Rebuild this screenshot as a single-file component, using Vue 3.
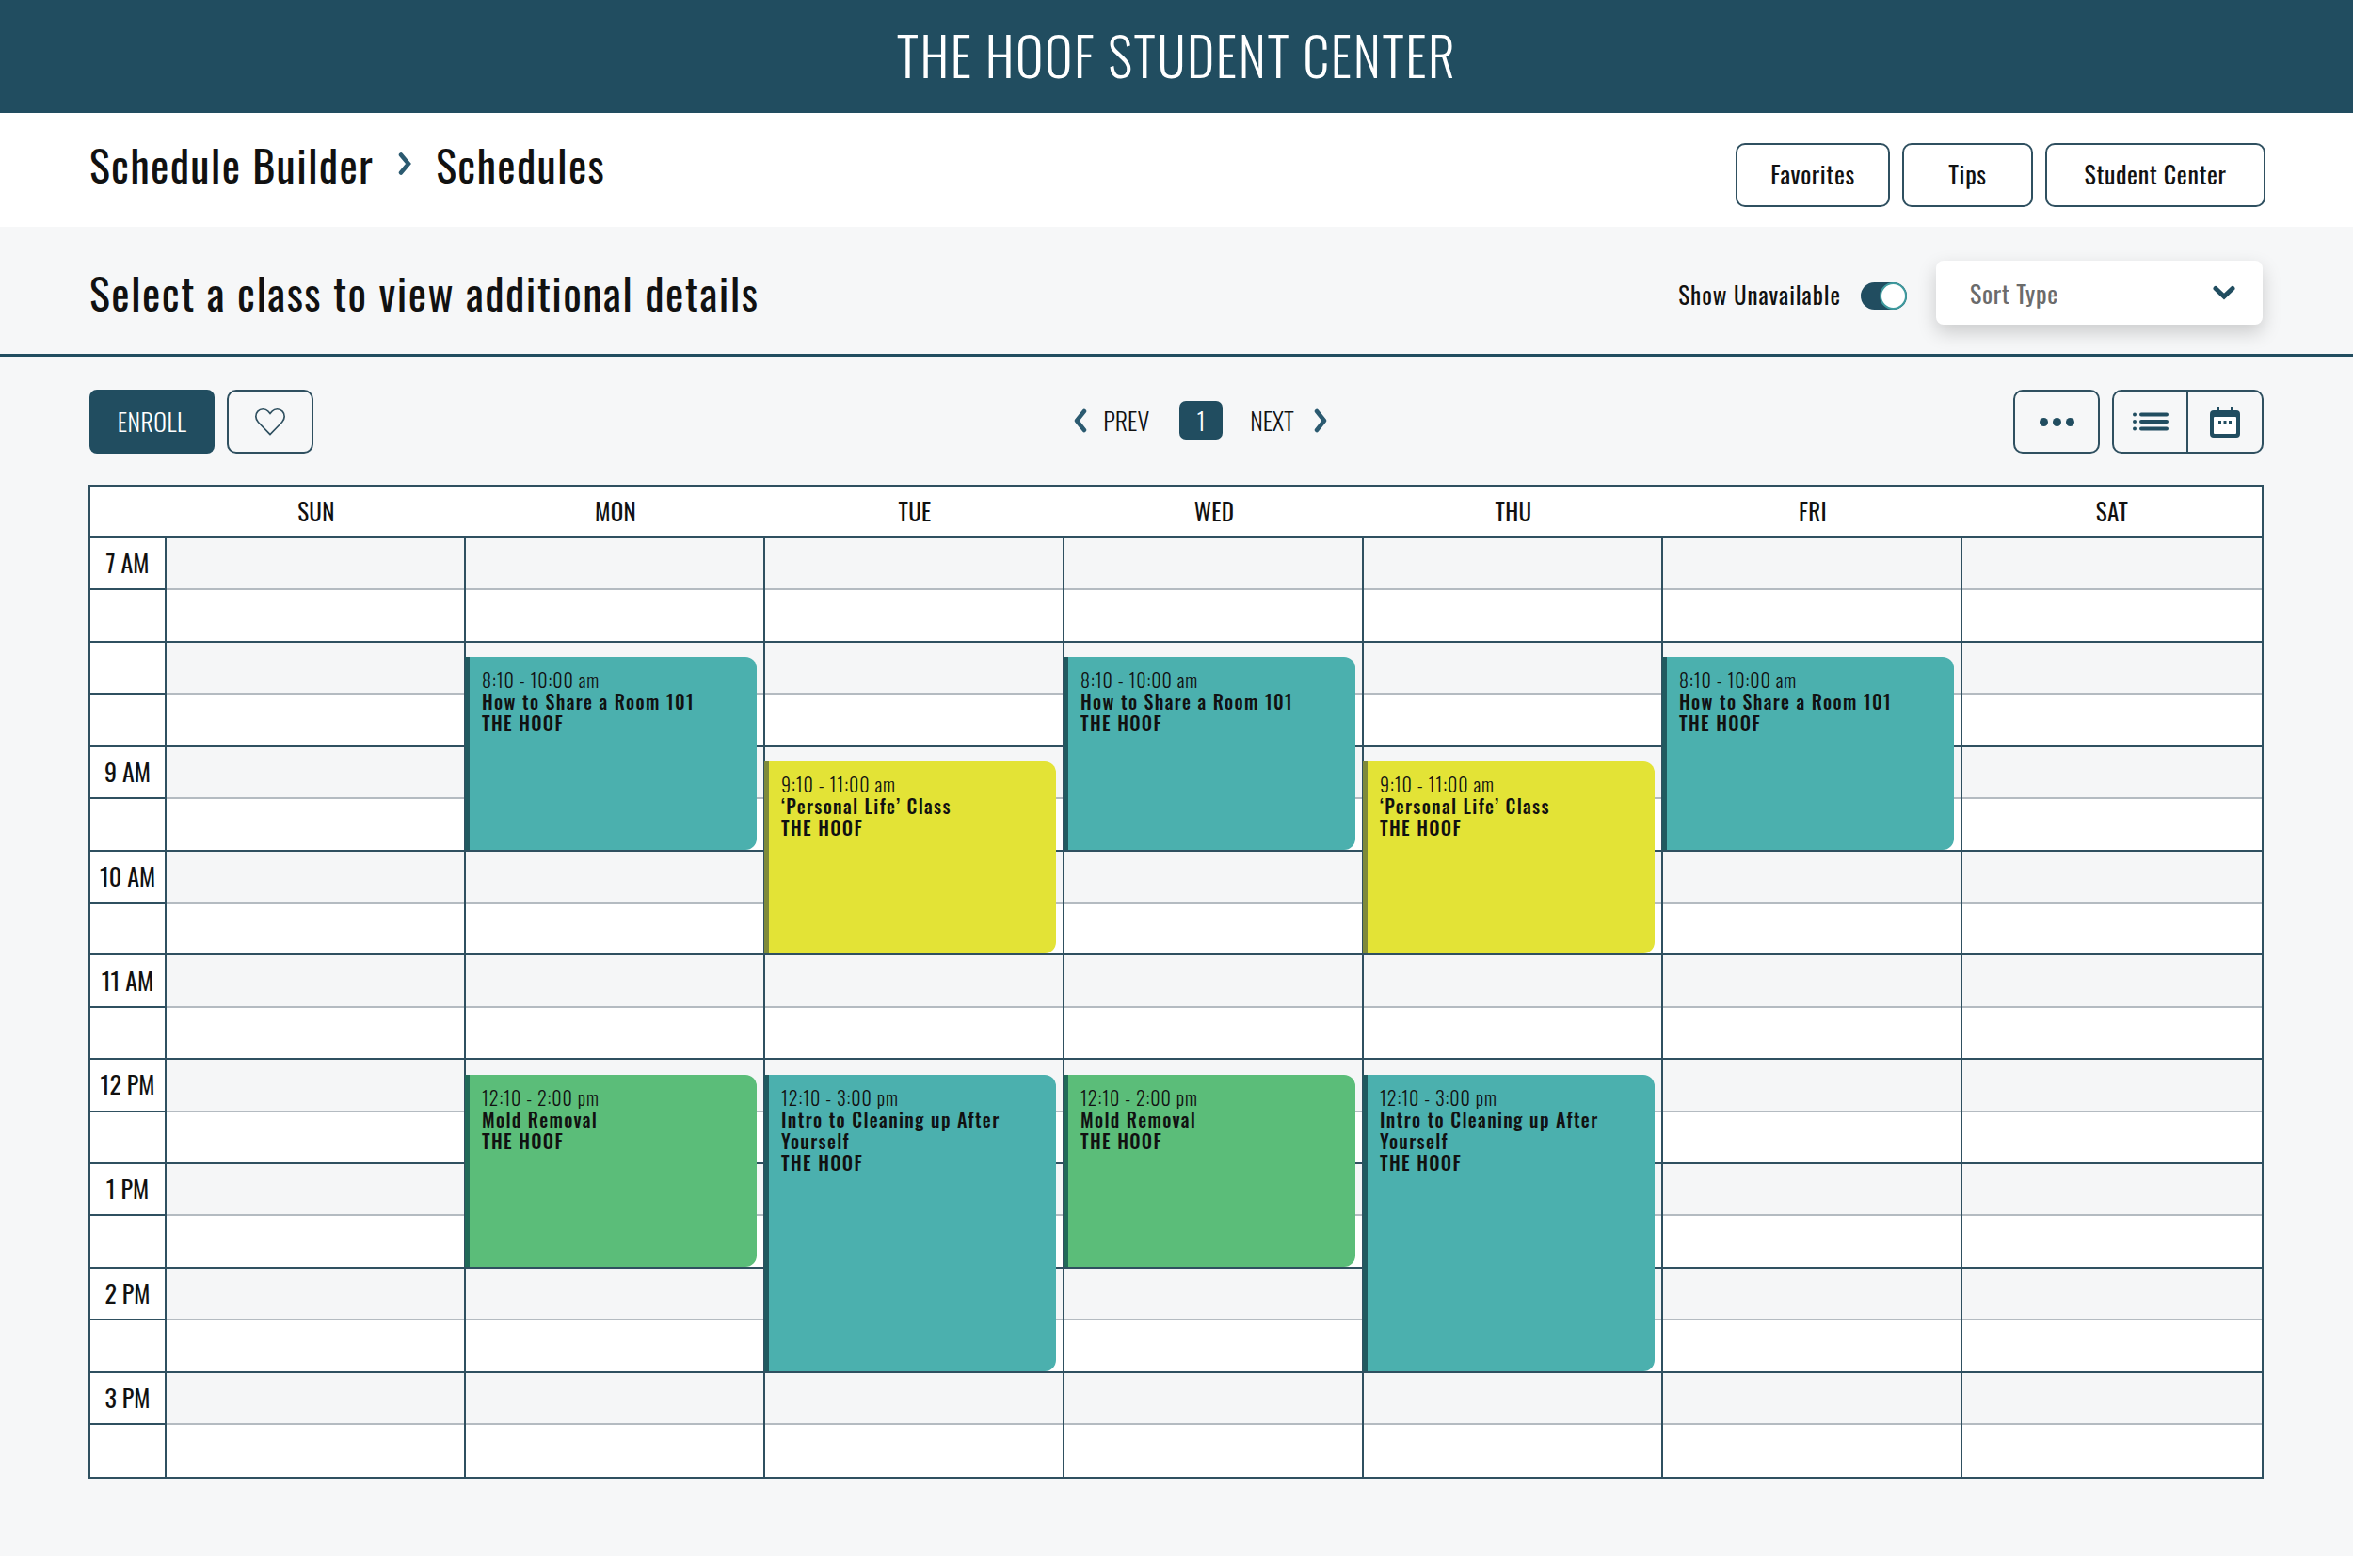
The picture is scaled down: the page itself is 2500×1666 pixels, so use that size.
<template>
  <div class="page">
    <header class="top-bar">
      <h1>THE HOOF STUDENT CENTER</h1>
    </header>

    <div class="crumbs">
      <div class="crumb-path">
        <span>Schedule Builder</span>
        <svg class="crumb-sep" viewBox="0 0 14 24"><path d="M3 2.5 11 12 3 21.5" /></svg>
        <span>Schedules</span>
      </div>
      <div class="crumb-links">
        <button class="outline fav">Favorites</button>
        <button class="outline tips">Tips</button>
        <button class="outline center">Student Center</button>
      </div>
    </div>

    <div class="filter-bar">
      <h2>Select a class to view additional details</h2>
      <div class="filter-right">
        <span class="show-label">Show Unavailable</span>
        <span class="toggle"><span class="knob"></span></span>
        <div class="sort">
          <span>Sort Type</span>
          <svg viewBox="0 0 24 16"><path d="M3 3.5 12 12l9-8.5" /></svg>
        </div>
      </div>
    </div>

    <main class="content">
      <div class="toolbar">
        <div class="tool-left">
          <button class="enroll">ENROLL</button>
          <button class="outline heart">
            <svg viewBox="0 0 36 32">
              <path d="M18 30.5 4.5 16.5C1 12.8 1 7.6 4 4.4 7.2 1 12.6 1 15.7 4.3L18 7l2.3-2.7c3.1-3.3 8.5-3.3 11.7.1 3 3.2 3 8.4-.5 12.1z" />
            </svg>
          </button>
        </div>

        <div class="pager">
          <svg class="pager-arrow" viewBox="0 0 14 26"><path d="M11 3 3 13l8 10" /></svg>
          <span class="pager-text prev">PREV</span>
          <span class="pager-num">1</span>
          <span class="pager-text next">NEXT</span>
          <svg class="pager-arrow" viewBox="0 0 14 26"><path d="M3 3l8 10-8 10" /></svg>
        </div>

        <div class="tool-right">
          <button class="outline more">
            <i></i><i></i><i></i>
          </button>
          <div class="view-group">
            <button class="view-btn list-btn">
              <svg viewBox="0 0 38 20">
                <circle cx="2" cy="2.5" r="2" />
                <circle cx="2" cy="10" r="2" />
                <circle cx="2" cy="17.5" r="2" />
                <rect x="7" y="0.5" width="31" height="4" rx="2" />
                <rect x="7" y="8" width="31" height="4" rx="2" />
                <rect x="7" y="15.5" width="31" height="4" rx="2" />
              </svg>
            </button>
            <button class="view-btn cal-btn">
              <svg viewBox="0 0 32 33">
                <path d="M7 0h3v4h12V0h3v4h3a4 4 0 0 1 4 4v21a4 4 0 0 1-4 4H4a4 4 0 0 1-4-4V8a4 4 0 0 1 4-4h3z" />
                <rect x="4" y="11" width="24" height="18" rx="1" fill="#fff" />
                <rect x="9" y="15" width="3" height="4" />
                <rect x="14.5" y="15" width="3" height="4" />
                <rect x="20" y="15" width="3" height="4" />
              </svg>
            </button>
          </div>
        </div>
      </div>

      <div class="calendar">
        <div class="cal-head">
          <div class="head-corner"></div>
          <div v-for="d in days" :key="d.name" class="head-day">{{ d.name }}</div>
        </div>
        <div class="cal-body">
          <div class="time-col">
            <div
              v-for="(label, i) in slots"
              :key="i"
              class="time-cell"
              :class="{ 'row-last': i === slots.length - 1 }"
            >
              {{ label }}
            </div>
          </div>
          <div v-for="d in days" :key="d.name" class="day-col">
            <div
              v-for="(label, i) in slots"
              :key="i"
              class="slot"
              :class="[i % 2 ? 'slot-low' : 'slot-high', { 'row-last': i === slots.length - 1 }]"
            ></div>
            <div
              v-for="ev in d.events"
              :key="ev.time"
              class="event"
              :class="ev.color"
              :style="eventBox(ev)"
            >
              <div class="ev-time">{{ ev.time }}</div>
              <div class="ev-name">{{ ev.name }}</div>
              <div class="ev-place">THE HOOF</div>
            </div>
          </div>
        </div>
      </div>
    </main>
  </div>
</template>

<script setup>
const HOUR = 110.86;

const slots = [
  '7 AM', '', '', '', '9 AM', '', '10 AM', '', '11 AM', '',
  '12 PM', '', '1 PM', '', '2 PM', '', '3 PM', '',
];

const share = { time: '8:10 - 10:00 am', name: 'How to Share a Room 101', color: 'teal', start: 8, end: 10 };
const life = { time: '9:10 - 11:00 am', name: '‘Personal Life’ Class', color: 'yellow', start: 9, end: 11 };
const mold = { time: '12:10 - 2:00 pm', name: 'Mold Removal', color: 'green', start: 12, end: 14 };
const intro = { time: '12:10 - 3:00 pm', name: 'Intro to Cleaning up After Yourself', color: 'teal', start: 12, end: 15 };

const days = [
  { name: 'SUN', events: [] },
  { name: 'MON', events: [share, mold] },
  { name: 'TUE', events: [life, intro] },
  { name: 'WED', events: [share, mold] },
  { name: 'THU', events: [life, intro] },
  { name: 'FRI', events: [share] },
  { name: 'SAT', events: [] },
];

function eventBox(ev) {
  const top = (ev.start - 7) * HOUR + 15.5;
  const bottom = (ev.end - 7) * HOUR - 2;
  return { top: top + 'px', height: bottom - top + 'px' };
}
</script>

<style>
body {
  margin: 0;
  background: #fff;
}
</style>

<style scoped>
* {
  box-sizing: border-box;
}
.page {
  font-family: Oswald, "Roboto Condensed", "Liberation Sans", sans-serif;
  font-weight: 400;
  color: #111;
}
button {
  font: inherit;
  color: inherit;
  background: none;
  padding: 0;
}
.top-bar {
  height: 120px;
  padding-bottom: 6px;
  background: #214d60;
  display: flex;
  align-items: center;
  justify-content: center;
}
.top-bar h1 {
  margin: 0;
  color: #fff;
  font-size: 56px;
  font-weight: 350;
  letter-spacing: 1.6px;
}
.crumbs {
  height: 121px;
  padding: 0 93px 0 95px;
  display: flex;
  align-items: center;
  justify-content: space-between;
  background: #fff;
}
.crumb-path {
  display: flex;
  align-items: center;
  font-size: 46px;
  letter-spacing: 1.3px;
  margin-top: -14px;
}
.crumb-sep {
  width: 14px;
  height: 24px;
  margin: 0 26px;
  fill: none;
  stroke: #2b5a70;
  stroke-width: 4.5;
  stroke-linecap: round;
}
.crumb-links {
  display: flex;
  gap: 13px;
  margin-top: 11px;
}
.outline {
  height: 68px;
  padding-bottom: 3px;
  border: 2px solid #2f5060;
  border-radius: 10px;
  font-size: 26px;
  letter-spacing: 0.6px;
}
.fav {
  width: 164px;
}
.tips {
  width: 139px;
}
.center {
  width: 234px;
}
.filter-bar {
  height: 138px;
  padding: 0 96px 0 95px;
  display: flex;
  align-items: center;
  justify-content: space-between;
  background: #f6f7f8;
  border-bottom: 3px solid #214d60;
}
.filter-bar h2 {
  margin: 2px 0 0;
  font-size: 46px;
  font-weight: 400;
  letter-spacing: 1.45px;
}
.filter-right {
  display: flex;
  align-items: center;
}
.show-label {
  font-size: 25px;
  letter-spacing: 0.95px;
  margin-top: 7px;
}
.toggle {
  width: 49px;
  height: 29px;
  margin: 12px 31px 0 21px;
  background: #214d60;
  border-radius: 15px;
  display: flex;
  justify-content: flex-end;
}
.knob {
  width: 29px;
  height: 29px;
  background: #fff;
  border: 2px solid #3f9a9e;
  border-radius: 50%;
}
.sort {
  width: 347px;
  height: 68px;
  padding: 0 29px 0 36px;
  background: #fff;
  border-radius: 8px;
  box-shadow: 0 8px 20px rgba(0, 0, 0, 0.18);
  display: flex;
  align-items: center;
  justify-content: space-between;
  font-size: 26px;
  letter-spacing: 0.7px;
  color: #6b6b6b;
  margin-top: 5px;
}
.sort svg {
  width: 24px;
  height: 16px;
  fill: none;
  stroke: #214d60;
  stroke-width: 5;
  stroke-linecap: round;
}
.content {
  height: 1274px;
  padding: 35px 95px 0 94px;
  background: #f6f7f8;
}
.toolbar {
  display: grid;
  grid-template-columns: 1fr auto 1fr;
  align-items: center;
  margin-bottom: 33px;
}
.tool-left {
  display: flex;
  gap: 13px;
  padding-left: 1px;
}
.enroll {
  width: 133px;
  height: 68px;
  padding-bottom: 2px;
  background: #214d60;
  color: #fff;
  border: none;
  border-radius: 8px;
  font-size: 26px;
  font-weight: 350;
  letter-spacing: 0.5px;
}
.heart {
  width: 92px;
  padding-bottom: 0;
  display: flex;
  align-items: center;
  justify-content: center;
}
.heart svg {
  width: 34px;
  height: 30px;
  fill: none;
  stroke: #2f5060;
  stroke-width: 1.8;
}
.pager {
  display: flex;
  align-items: center;
  font-size: 26px;
  font-weight: 350;
  margin: -3px 0 0 52px;
}
.pager-arrow {
  width: 14px;
  height: 26px;
  fill: none;
  stroke: #2b5a70;
  stroke-width: 4.5;
  stroke-linecap: round;
  stroke-linejoin: round;
}
.pager-text.prev {
  margin: 0 32px 0 17px;
}
.pager-text.next {
  margin: 0 21px 0 29px;
}
.pager-num {
  width: 46px;
  height: 41px;
  background: #214d60;
  color: #fff;
  border-radius: 7px;
  display: flex;
  align-items: center;
  justify-content: center;
}
.tool-right {
  display: flex;
  justify-content: flex-end;
  gap: 13px;
}
.more {
  width: 92px;
  padding-bottom: 0;
  display: flex;
  align-items: center;
  justify-content: center;
  gap: 5px;
}
.more i {
  width: 9px;
  height: 9px;
  border-radius: 50%;
  background: #214d60;
}
.view-group {
  width: 161px;
  height: 68px;
  border: 2px solid #2f5060;
  border-radius: 10px;
  display: flex;
}
.view-btn {
  border: none;
  display: flex;
  align-items: center;
  justify-content: center;
}
.list-btn {
  width: 79px;
  border-right: 2px solid #2f5060;
}
.cal-btn {
  flex: 1;
}
.list-btn svg {
  width: 38px;
  height: 20px;
  fill: #214d60;
}
.cal-btn svg {
  width: 32px;
  height: 33px;
  fill: #214d60;
}
.calendar {
  border: 2px solid #2f5060;
  background: #fff;
}
.cal-head {
  display: grid;
  grid-template-columns: 81px repeat(7, 1fr);
  height: 55px;
  border-bottom: 2px solid #2f5060;
}
.head-day {
  display: flex;
  align-items: center;
  justify-content: center;
  padding-bottom: 3px;
  font-size: 25px;
  letter-spacing: 0.3px;
}
.cal-body {
  display: grid;
  grid-template-columns: 81px repeat(7, 1fr);
}
.time-col {
  border-right: 2px solid #2f5060;
}
.time-cell {
  height: 55.43px;
  padding-bottom: 2px;
  border-bottom: 2px solid #2f5060;
  display: flex;
  align-items: center;
  justify-content: center;
  font-size: 26px;
}
.day-col {
  position: relative;
  border-right: 2px solid #2f5060;
}
.day-col:last-child {
  border-right: none;
}
.slot {
  height: 55.43px;
}
.slot-high {
  background: #f5f6f7;
  border-bottom: 2px solid #b4bbc1;
}
.slot-low {
  background: #fff;
  border-bottom: 2px solid #2f5060;
}
.row-last {
  height: 54.5px;
  border-bottom: none;
}
.event {
  position: absolute;
  left: -1px;
  right: 7px;
  padding: 13px 12px 13px 13px;
  border-left: 5px solid;
  border-radius: 0 12px 12px 0;
  font-size: 20px;
  font-weight: 300;
  line-height: 23px;
}
.teal {
  background: #4bb0ae;
  border-left-color: #215a60;
}
.yellow {
  background: #e3e336;
  border-left-color: #7f8a3a;
}
.green {
  background: #5bbd79;
  border-left-color: #216a58;
}
.ev-time {
  letter-spacing: 0.9px;
}
.ev-name,
.ev-place {
  font-weight: 500;
  letter-spacing: 1.35px;
}
</style>
